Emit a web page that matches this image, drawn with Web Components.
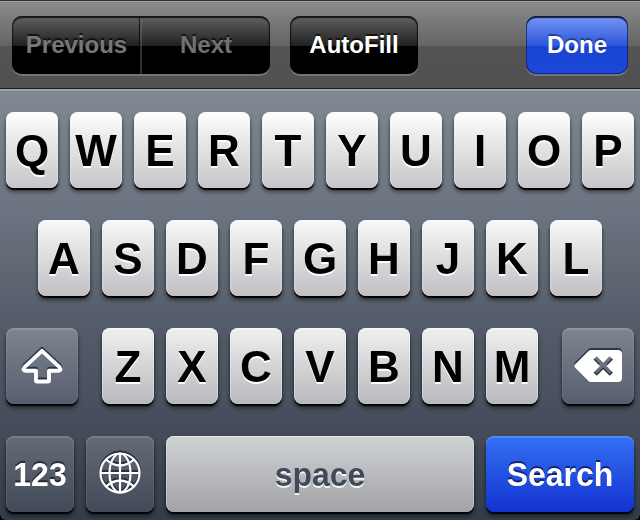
<!DOCTYPE html>
<html lang="en">
<head>
<meta charset="utf-8">
<title>Keyboard</title>
<style>
html,body{margin:0;background:#000}
body{width:640px;height:520px;overflow:hidden}
</style>
</head>
<body>
<on-screen-keyboard></on-screen-keyboard>
<script>
class BarButton extends HTMLElement {
  constructor() {
    super();
    this.attachShadow({ mode: 'open' }).innerHTML = `
      <style>
      :host{display:flex;justify-content:center;box-sizing:border-box;height:58px;padding-top:17px;border-radius:10px;color:#fff;
        font:bold 24px/24px "Liberation Sans",Arial,sans-serif;text-shadow:0 -2px 0 rgba(0,0,0,.65);
        background:linear-gradient(#626262 0,#202020 30px,#000 30px);
        box-shadow:inset 0 2px 1px #161616,inset 1px 0 1px rgba(0,0,0,.7),inset -1px 0 1px rgba(0,0,0,.7),0 2px 0 rgba(160,160,160,.45)}
      :host([kind=done]){background:linear-gradient(#7797f4 0,#2c55d9 30px,#1944d4 30px,#1b48da);
        box-shadow:inset 0 2px 1px #101a38,inset 0 0 0 1px rgba(8,20,80,.6),0 2px 0 rgba(160,160,160,.45);text-shadow:0 -2px 0 rgba(10,25,90,.55)}
      :host([kind=first]){border-radius:10px 0 0 10px;color:#777;padding-left:1px}
      :host([kind=last]){border-radius:0 10px 10px 0;color:#717171;padding-left:2px;
        box-shadow:inset 0 2px 1px #161616,inset 2px 0 0 rgba(120,120,120,.4),inset -1px 0 1px rgba(0,0,0,.7),0 2px 0 rgba(160,160,160,.45)}
      span{display:block;height:24px;white-space:nowrap}
      </style><span><slot></slot></span>`;
  }
}
customElements.define('bar-button', BarButton);

class KeyCap extends HTMLElement {
  constructor() {
    super();
    this.attachShadow({ mode: 'open' }).innerHTML = `
      <style>
      :host{display:flex;justify-content:center;box-sizing:border-box;width:52px;height:76px;padding-top:17px;border-radius:8px;color:#000;
        font:bold 44px/44px "Liberation Sans",Arial,sans-serif;text-shadow:0 2px 0 #fff;
        background:linear-gradient(var(--top,#fdfdfd),var(--bottom,#c6c6ca));
        box-shadow:inset 0 1px 0 rgba(255,255,255,.5),inset 1px 0 0 rgba(255,255,255,.3),inset -1px 0 0 rgba(255,255,255,.3),0 2px 1px #000,0 4px 4px rgba(0,0,0,.5)}
      :host([kind]){padding-top:23px;font-size:32px;line-height:32px;color:#fff;text-shadow:0 -2px 0 rgba(20,26,38,.75)}
      :host([kind=dark]){box-shadow:inset 0 2px 0 rgba(255,255,255,.13),inset 1px 0 0 rgba(255,255,255,.08),inset -1px 0 0 rgba(255,255,255,.08),0 2px 1px #000,0 4px 4px rgba(0,0,0,.5)}
      :host([kind=space]){width:308px;color:#414a59;text-shadow:0 2px 0 rgba(255,255,255,.85)}
      :host([kind=search]){width:148px;text-shadow:0 -2px 0 rgba(8,24,90,.8);
        box-shadow:inset 0 2px 0 rgba(130,175,255,.4),0 2px 1px #000,0 4px 4px rgba(0,0,0,.5)}
      :host([icon]){padding-top:0;align-items:center}
      span{display:block;transform:scaleY(1.02);transform-origin:50% 84.65%;white-space:nowrap}
      :host([icon]) span{transform:none;display:flex}
      </style><span><slot></slot></span>`;
  }
}
customElements.define('key-cap', KeyCap);

const glyphs = {
  shift: `<path d="M21 3.800 38.500 20.200Q40.800 23.700 37.500 23.700H28V33.400Q28 34.500 27 34.500H16Q15 34.500 15 33.400V23.700H4.500Q1.200 23.700 3.500 20.200Z" fill="none" stroke="#fff" stroke-width="3.9" stroke-linejoin="round"/>`,
  globe: `<g fill="none" stroke="#fff" stroke-width="2.2"><circle cx="21" cy="20" r="19.500"/><ellipse cx="21" cy="20" rx="10.500" ry="19.500"/><path d="M21 .5V39.500M1.500 20H40.500M7 6.500Q21 18.500 35 6.500M7 33.500Q21 21.500 35 33.500"/></g>`,
  erase: `<path fill-rule="evenodd" fill="#fff" d="M18 2H45Q49 2 49 6V30Q49 34 45 34H18Q16.500 34 15.500 33L2 19.500Q.8 18 2 16.500L15.500 3Q16.500 2 18 2ZM20.500 11.500 27 18 20.500 24.500 23.700 27.800 30.200 21.300 36.700 27.800 40 24.500 33.500 18 40 11.500 36.700 8.200 30.200 14.700 23.700 8.200Z"/>`
};
const sizes = { shift: [42, 38], globe: [42, 42], erase: [50, 36] };
class KeyGlyph extends HTMLElement {
  connectedCallback() {
    const n = this.getAttribute('name'), [w, h] = sizes[n];
    this.attachShadow({ mode: 'open' }).innerHTML = `
      <style>:host{display:block}svg{display:block;overflow:visible;filter:drop-shadow(0 -2px 0 rgba(25,31,43,.75))}</style>
      <svg width="${w}" height="${h}" viewBox="0 0 ${w} ${h}">${glyphs[n]}</svg>`;
  }
}
customElements.define('key-glyph', KeyGlyph);

class OnScreenKeyboard extends HTMLElement {
  constructor() {
    super();
    const row = s => [...s].map(c => `<key-cap>${c}</key-cap>`).join('');
    this.attachShadow({ mode: 'open' }).innerHTML = `
      <style>
      :host{display:flex;flex-direction:column;width:640px;height:520px;background:#000}
      header{display:flex;box-sizing:border-box;height:89px;padding:16px 12px 0;
        background:linear-gradient(#303030 0 1px,#a0a0a0 1px 2px,#8a8a8a 2px,#646464 46px,#545454 46px,#505050 88px,#1c1c1c 88px)}
      nav{display:flex}
      bar-button[kind=first]{width:128px}
      bar-button[kind=last]{width:130px}
      .fill{width:128px;margin-left:20px}
      bar-button[kind=done]{width:102px;margin-left:auto}
      main{flex:1;display:flex;flex-direction:column;gap:32px;box-sizing:border-box;padding:23px 6px 0;border-radius:0 0 6px 6px;
        background:linear-gradient(#a3aab4 0,#949ca8 2px,#808893 2px,#6d7481 120px,#545d69 230px,#464e5b 330px,#333c4a 431px)}
      div{display:flex;justify-content:center;gap:12px}
      .r3{justify-content:space-between}
      .g{width:72px;--top:#7d858f;--bottom:#575e70}
      .r3 div key-cap{--top:#f0f0f1;--bottom:#b9b9bd}
      .r2{--top:#f8f8f9;--bottom:#c0c0c4}
      .d{width:68px;--top:#646b77;--bottom:#424a57}
      [kind=space]{--top:#cfd2d3;--bottom:#a3a3a8}
      [kind=search]{--top:#3470f2;--bottom:#1333d2}
      </style>
      <header>
        <nav><bar-button kind="first">Previous</bar-button><bar-button kind="last">Next</bar-button></nav>
        <bar-button class="fill">AutoFill</bar-button>
        <bar-button kind="done">Done</bar-button>
      </header>
      <main>
        <div>${row('QWERTYUIOP')}</div>
        <div class="r2">${row('ASDFGHJKL')}</div>
        <div class="r3">
          <key-cap class="g" kind="dark" icon><key-glyph name="shift"></key-glyph></key-cap>
          <div>${row('ZXCVBNM')}</div>
          <key-cap class="g" kind="dark" icon><key-glyph name="erase"></key-glyph></key-cap>
        </div>
        <div>
          <key-cap class="d" kind="dark">123</key-cap>
          <key-cap class="d" kind="dark" icon><key-glyph name="globe"></key-glyph></key-cap>
          <key-cap kind="space">space</key-cap>
          <key-cap kind="search">Search</key-cap>
        </div>
      </main>`;
  }
}
customElements.define('on-screen-keyboard', OnScreenKeyboard);
</script>
</body>
</html>
